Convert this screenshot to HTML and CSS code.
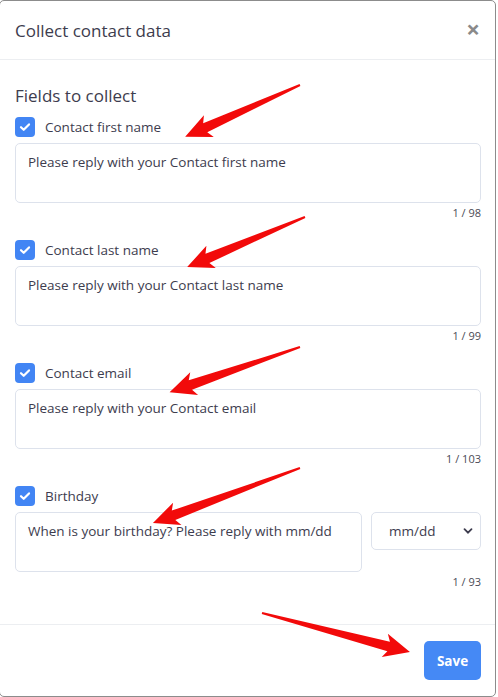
FILE: index.html
```html
<!DOCTYPE html>
<html lang="en">
<head>
    <meta charset="UTF-8">
    <title>Collect contact data</title>
    <link rel="stylesheet" href="styles.css">
</head>
<body>
    <div class="modal">
        <div class="modalHeader">
            <h4 class="modalTitle">Collect contact data</h4>
            <span class="closeBtn">&times;</span>
        </div>
        <div class="modalBody">
            <h5 class="sectionTitle">Fields to collect</h5>

            <div class="field">
                <label class="checkRow"><span class="check"><svg viewBox="0 0 20 20" width="20" height="20"><path d="M6 10.2l2.7 2.6L14 7.4" fill="none" stroke="#fff" stroke-width="2.2" stroke-linecap="round" stroke-linejoin="round"/></svg></span>Contact first name</label>
                <textarea class="textarea">Please reply with your Contact first name</textarea>
                <div class="counter">1 / 98</div>
            </div>

            <div class="field">
                <label class="checkRow"><span class="check"><svg viewBox="0 0 20 20" width="20" height="20"><path d="M6 10.2l2.7 2.6L14 7.4" fill="none" stroke="#fff" stroke-width="2.2" stroke-linecap="round" stroke-linejoin="round"/></svg></span>Contact last name</label>
                <textarea class="textarea">Please reply with your Contact last name</textarea>
                <div class="counter">1 / 99</div>
            </div>

            <div class="field">
                <label class="checkRow"><span class="check"><svg viewBox="0 0 20 20" width="20" height="20"><path d="M6 10.2l2.7 2.6L14 7.4" fill="none" stroke="#fff" stroke-width="2.2" stroke-linecap="round" stroke-linejoin="round"/></svg></span>Contact email</label>
                <textarea class="textarea">Please reply with your Contact email</textarea>
                <div class="counter">1 / 103</div>
            </div>

            <div class="field">
                <label class="checkRow"><span class="check"><svg viewBox="0 0 20 20" width="20" height="20"><path d="M6 10.2l2.7 2.6L14 7.4" fill="none" stroke="#fff" stroke-width="2.2" stroke-linecap="round" stroke-linejoin="round"/></svg></span>Birthday</label>
                <div class="dateRow">
                    <textarea class="textarea">When is your birthday? Please reply with mm/dd</textarea>
                    <div class="select">
                        <span>mm/dd</span>
                        <svg viewBox="0 0 10 10" width="10" height="10"><path d="M1.5 3.2L5 6.7l3.5-3.5" fill="none" stroke="#3d3c4e" stroke-width="1.8" stroke-linecap="round"/></svg>
                    </div>
                </div>
                <div class="counter">1 / 93</div>
            </div>
        </div>
        <div class="modalFooter">
            <button class="saveBtn">Save</button>
        </div>
    </div>

    <!-- annotation arrows drawn over the screenshot -->
    <svg class="arrows" width="498" height="697" viewBox="0 0 498 697">
        <g fill="#f20a0a">
            <polygon points="0,-1 104,-5 100,-12 126,0 100,12 104,5 0,1" transform="translate(300 85) rotate(155.7)"/>
            <polygon points="0,-1 106,-5 102,-12 128,0 102,12 106,5 0,1" transform="translate(305 217) rotate(157)"/>
            <polygon points="0,-1 116,-5 112,-12 138,0 112,12 116,5 0,1" transform="translate(300 347) rotate(160.9)"/>
            <polygon points="0,-1 135,-5 131,-12 157,0 131,12 135,5 0,1" transform="translate(300 468) rotate(159.5)"/>
            <polygon points="0,-1 131,-5 127,-12 153,0 127,12 131,5 0,1" transform="translate(262 613) rotate(14.8)"/>
        </g>
    </svg>
</body>
</html>
```

FILE: styles.css
```css
body {
  margin: 0;
  background: #ffffff;
  color: #3d3c4e;
  font-family: "Open Sans", sans-serif;
  position: relative;
  overflow: hidden;
}

/* Modal box, left edge falls just off screen */
.modal {
  width: 495px;
  height: 695px;
  margin-left: -1px;
  border: 1px solid #8c8c8c;
  border-radius: 5px;
  display: flex;
  flex-direction: column;
}

.modalHeader {
  height: 58px;
  padding: 0 15px;
  border-bottom: 1px solid #eceef1;
  display: flex;
  align-items: center;
  justify-content: space-between;
}

.modalTitle {
  margin: 0;
  font-size: 17px;
  font-weight: 400;
}

.closeBtn {
  font-size: 24px;
  font-weight: 700;
  color: #8a8a8a;
  line-height: 1;
  margin-top: -3px;
}

.modalBody {
  padding: 24px 14px 15px 15px;
  flex: 1;
}

.sectionTitle {
  margin: 0 0 9px;
  font-size: 17px;
  font-weight: 500;
  line-height: 24px;
}

.field {
  margin-bottom: 19px;
}

.checkRow {
  display: flex;
  align-items: center;
  height: 20px;
  font-size: 13.5px;
  font-weight: 500;
  margin-bottom: 6px;
}

.check {
  width: 20px;
  height: 20px;
  border-radius: 4px;
  background: #4285f4;
  margin-right: 10px;
  display: flex;
}

.textarea {
  display: block;
  box-sizing: border-box;
  width: 100%;
  height: 60px;
  margin: 0;
  padding: 8px 12px;
  border: 1px solid #dde2ec;
  border-radius: 5px;
  resize: none;
  font: 400 13.5px/20px "Open Sans", sans-serif;
  color: #3d3c4e;
}

.dateRow {
  display: grid;
  grid-template-columns: 1fr 110px;
  gap: 9px;
  align-items: start;
}

.select {
  box-sizing: border-box;
  height: 38px;
  border: 1px solid #dde2ec;
  border-radius: 5px;
  display: flex;
  align-items: center;
  justify-content: space-between;
  padding: 0 7px 0 17px;
  font-size: 13.5px;
}

.counter {
  text-align: right;
  font-size: 11px;
  line-height: 16px;
  margin-top: 2px;
  color: #4a4a55;
}

.modalFooter {
  border-top: 1px solid #eceef1;
  padding: 16px 14px 16px 15px;
  display: flex;
  justify-content: flex-end;
}

.saveBtn {
  width: 57px;
  height: 39px;
  border: none;
  border-radius: 5px;
  background: #4589f5;
  color: #ffffff;
  font: 700 13.5px "Open Sans", sans-serif;
}

.arrows {
  position: absolute;
  top: 0;
  left: 0;
  pointer-events: none;
}
```
